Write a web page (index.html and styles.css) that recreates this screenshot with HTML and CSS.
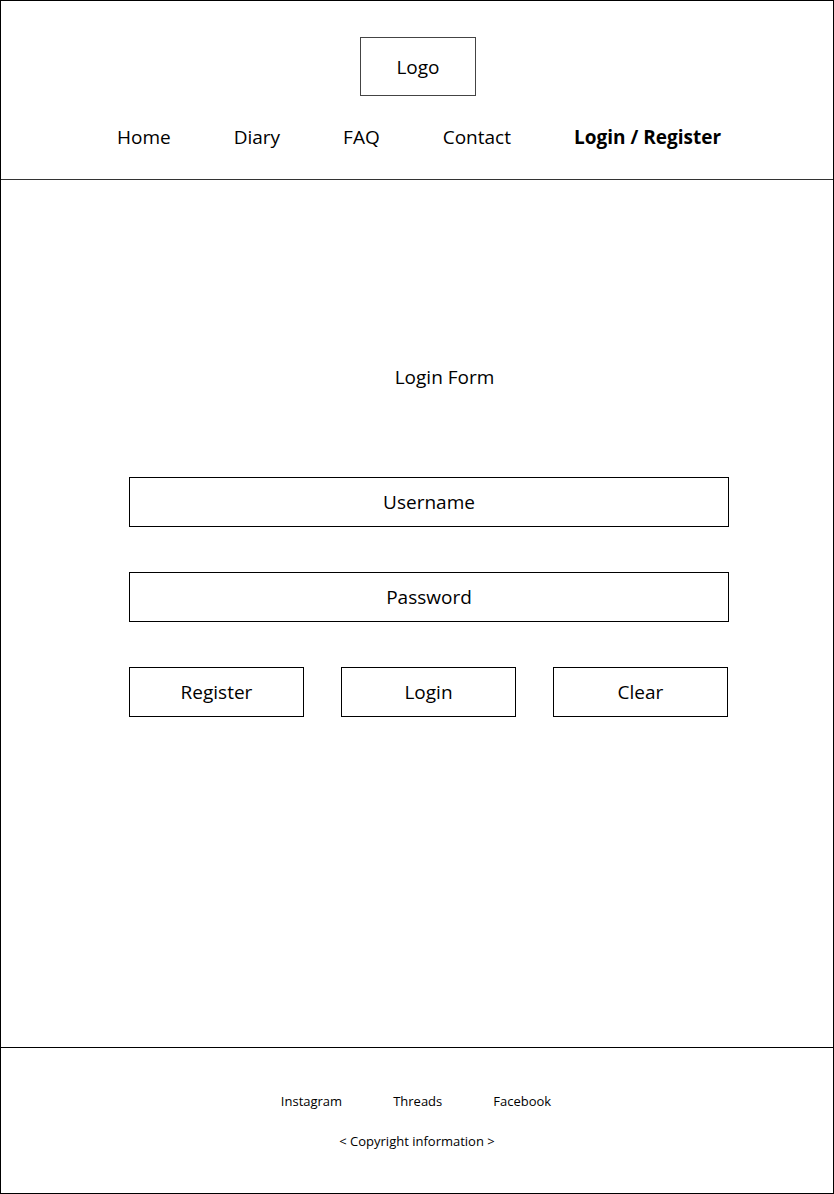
FILE: index.html
```html
<!DOCTYPE html>
<html lang="en">
<head>
<meta charset="utf-8">
<title>Login</title>
<link rel="stylesheet" href="styles.css">
</head>
<body>
<div class="page">
  <header class="header">
    <div class="logo">Logo</div>
    <nav class="nav">
      <a class="nav-link">Home</a>
      <a class="nav-link">Diary</a>
      <a class="nav-link">FAQ</a>
      <a class="nav-link">Contact</a>
      <a class="nav-link active">Login / Register</a>
    </nav>
  </header>
  <main class="main">
    <div class="form">
      <div class="form-title">Login Form</div>
      <div class="field">Username</div>
      <div class="field">Password</div>
      <div class="buttons">
        <div class="btn">Register</div>
        <div class="btn">Login</div>
        <div class="btn">Clear</div>
      </div>
    </div>
  </main>
  <footer class="footer">
    <div class="social">
      <a class="social-link">Instagram</a>
      <a class="social-link">Threads</a>
      <a class="social-link">Facebook</a>
    </div>
    <div class="copyright">&lt; Copyright information &gt;</div>
  </footer>
</div>
</body>
</html>
```

FILE: styles.css
```css
html, body {
  margin: 0;
  padding: 0;
  background: #fff;
}
body {
  font-family: "Open Sans", "Noto Sans", sans-serif;
  color: #000;
}
.page {
  width: 834px;
  height: 1194px;
  box-sizing: border-box;
  border: 1px solid #000;
  display: flex;
  flex-direction: column;
}
.header {
  display: flex;
  flex-direction: column;
  align-items: center;
  padding: 36px 0 28px;
  border-bottom: 1px solid #333;
}
.logo {
  width: 116px;
  height: 59px;
  box-sizing: border-box;
  border: 1px solid #444;
  display: flex;
  align-items: center;
  justify-content: center;
  font-size: 19px;
  margin-left: 2px;
}
.nav {
  margin-top: 27px;
  display: flex;
  gap: 63px;
  height: 28px;
  line-height: 28px;
  font-size: 19px;
  margin-left: 4px;
}
.nav-link {
  color: #000;
}
.nav-link.active {
  font-weight: 700;
}
.main {
  flex: 1;
}
.form {
  width: 600px;
  margin-left: 128px;
  padding-top: 184px;
  display: flex;
  flex-direction: column;
}
.form-title {
  text-align: center;
  font-size: 19px;
  line-height: 26px;
  padding-left: 31px;
  margin-bottom: 87px;
}
.field, .btn {
  height: 50px;
  box-sizing: border-box;
  border: 1px solid #000;
  display: flex;
  align-items: center;
  justify-content: center;
  font-size: 19px;
}
.field {
  margin-bottom: 45px;
}
.buttons {
  display: flex;
  gap: 37px;
}
.btn {
  width: 175px;
}
.footer {
  height: 146px;
  box-sizing: border-box;
  flex-shrink: 0;
  border-top: 1px solid #000;
  padding-top: 43px;
  display: flex;
  flex-direction: column;
  align-items: center;
  font-size: 13px;
}
.social {
  display: flex;
  gap: 51px;
  line-height: 20px;
  margin-left: -2px;
}
.copyright {
  margin-top: 20px;
  line-height: 20px;
}
```
